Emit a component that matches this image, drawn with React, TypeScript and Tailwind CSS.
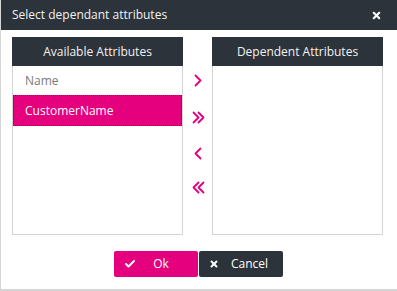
import { Check, X } from 'lucide-react';

const pink = '#e5007d';

function Chevron({ dir, double }: { dir: 'right' | 'left'; double?: boolean }) {
  const one = dir === 'right' ? 'M1 1 L6 6 L1 11' : 'M6 1 L1 6 L6 11';
  const two = dir === 'right' ? 'M6 1 L11 6 L6 11' : 'M11 1 L6 6 L11 11';
  return (
    <svg width={double ? 13 : 8} height="13" viewBox={double ? '-0.5 -0.5 13 13' : '-0.5 -0.5 8 13'} fill="none" stroke={pink} strokeWidth="1.8" strokeLinecap="round" strokeLinejoin="round">
      <path d={one} />
      {double && <path d={two} />}
    </svg>
  );
}

function ListBox({ title, items, selected }: { title: string; items: string[]; selected?: string }) {
  return (
    <div className="flex w-[171px] flex-col">
      <div className="flex h-[29px] items-center justify-center bg-[#2c333a] text-[12px] text-[#f2f2f2]">{title}</div>
      <div className="h-[169px] border-x border-b border-[#d4d4d4] bg-white">
        {items.map((it) =>
          it === selected ? (
            <div key={it} className="flex h-[31px] items-center border border-dotted border-[#5a2040] bg-[#e5007d] pl-[11px] text-[12px] text-white">
              {it}
            </div>
          ) : (
            <div key={it} className="flex h-[29px] items-center pl-3 text-[12px] text-[#7a7a7a]">
              {it}
            </div>
          )
        )}
      </div>
    </div>
  );
}

export default function App() {
  return (
    <div className="h-[291px] w-[397px] overflow-hidden bg-white font-['Open_Sans',sans-serif]">
      <div className="flex h-[291px] w-[400px] flex-col border-b-2 border-l border-[#d6d6d6]">
        {/* Title bar */}
        <div className="flex h-[30px] items-center justify-between bg-[#2c333a] pl-[11px] pr-[18px] text-[12px] text-[#f2f2f2]">
          <span>Select dependant attributes</span>
          <X size={11} strokeWidth={4.5} className="text-white" />
        </div>

        {/* Lists */}
        <div className="flex pl-[11px] pt-[7px]">
          <ListBox title="Available Attributes" items={['Name', 'CustomerName']} selected="CustomerName" />
          <div className="flex w-[29px] flex-col items-center pt-[33px]">
            <div className="flex h-[20px] items-center"><Chevron dir="right" /></div>
            <div className="mt-[17px] flex h-[20px] items-center pl-[2px]"><Chevron dir="right" double /></div>
            <div className="mt-[16px] flex h-[20px] items-center"><Chevron dir="left" /></div>
            <div className="mt-[14px] flex h-[20px] items-center pl-[2px]"><Chevron dir="left" double /></div>
          </div>
          <ListBox title="Dependent Attributes" items={[]} />
        </div>

        {/* Buttons */}
        <div className="mt-4 flex justify-center gap-[1px] pr-[4px]">
          <button className="flex h-[26px] w-[84px] items-center rounded-[2px] bg-[#e5007d] pl-[10px] text-[12px] text-white">
            <Check size={12} strokeWidth={4} />
            <span className="flex-1 pr-[12px] text-center">Ok</span>
          </button>
          <button className="flex h-[26px] w-[84px] items-center rounded-[2px] bg-[#2c333a] pl-[10px] text-[12px] text-white">
            <X size={10} strokeWidth={4.5} />
            <span className="ml-[12px]">Cancel</span>
          </button>
        </div>
      </div>
    </div>
  );
}
